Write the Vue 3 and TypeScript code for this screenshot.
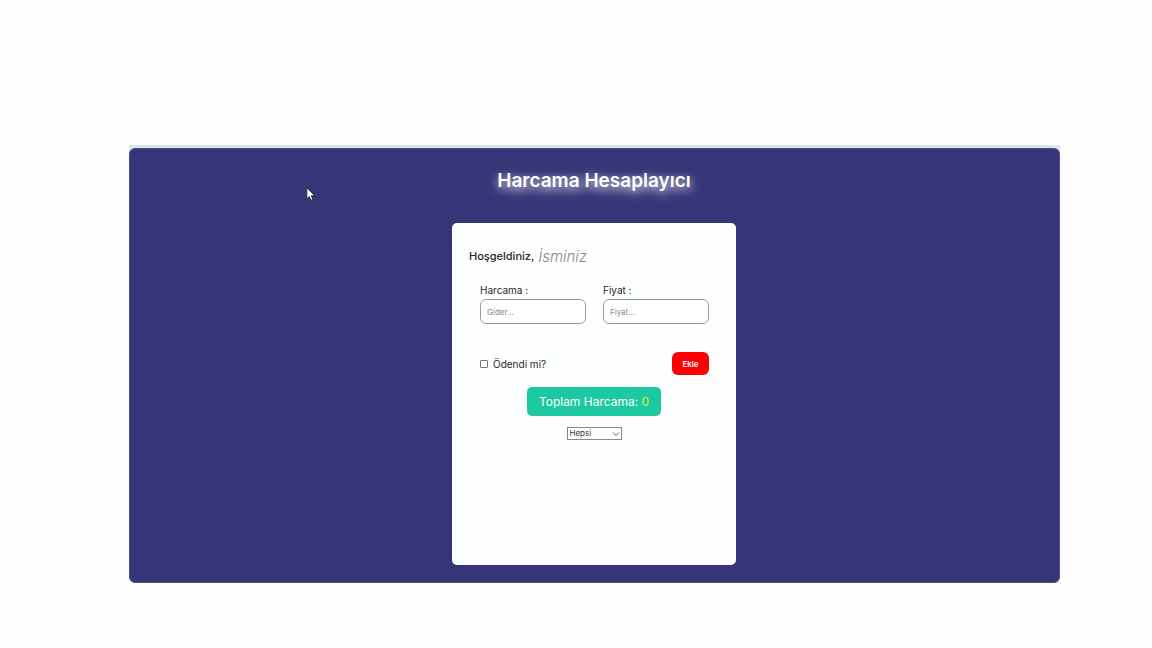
<script setup lang="ts">
import { computed, ref } from 'vue'

interface Expense {
  title: string
  price: number
  paid: boolean
}

const userName = ref('')
const title = ref('')
const price = ref('')
const paid = ref(false)
const filter = ref('all')
const expenses = ref<Expense[]>([])

const total = computed(() => expenses.value.reduce((sum, item) => sum + item.price, 0))
const visible = computed(() =>
  expenses.value.filter((item) => filter.value === 'all' || item.paid === (filter.value === 'paid')),
)

function addExpense() {
  const amount = Number(price.value)
  if (!title.value.trim() || !amount) return
  expenses.value.push({ title: title.value.trim(), price: amount, paid: paid.value })
  title.value = ''
  price.value = ''
  paid.value = false
}
</script>

<template>
  <div class="page">
    <div class="frame">
      <main class="panel">
        <h1>Harcama Hesaplayıcı</h1>
        <section class="card">
          <div class="welcome">
            <label for="user">Hoşgeldiniz,</label>
            <input id="user" v-model="userName" type="text" placeholder="İsminiz" />
          </div>
          <form class="form" @submit.prevent="addExpense">
            <div class="fields">
              <div class="field">
                <label for="title">Harcama :</label>
                <input id="title" v-model="title" type="text" placeholder="Gider..." />
              </div>
              <div class="field">
                <label for="price">Fiyat :</label>
                <input id="price" v-model="price" type="text" placeholder="Fiyat..." />
              </div>
            </div>
            <div class="actions">
              <label class="paid" for="paid">
                <input id="paid" v-model="paid" type="checkbox" />
                <span>Ödendi mi?</span>
              </label>
              <button type="submit">Ekle</button>
            </div>
          </form>
          <p class="total">Toplam Harcama: <span>{{ total }}</span></p>
          <div class="filter">
            <select v-model="filter" aria-label="Filtre">
              <option value="all">Hepsi</option>
              <option value="paid">Ödendi</option>
              <option value="unpaid">Ödenmedi</option>
            </select>
            <svg viewBox="0 0 8 6" aria-hidden="true">
              <path d="M1 1.5 L4 4.5 L7 1.5" />
            </svg>
          </div>
          <ul v-if="visible.length" class="list">
            <li v-for="(item, i) in visible" :key="i">
              <span>{{ item.title }}</span><span>{{ item.price }}</span>
            </li>
          </ul>
        </section>
      </main>
    </div>
    <svg class="cursor" viewBox="0 0 12 18" aria-hidden="true">
      <path d="M1 1 V14 L4 11.3 L6 16 L8.3 15 L6.3 10.5 H10.5 Z" />
    </svg>
  </div>
</template>

<style>
body {
  margin: 0;
  background: #fefefe;
}
</style>

<style scoped>
* {
  box-sizing: border-box;
}

.page {
  position: relative;
  padding: 145px 92px 64px 129px;
  font-family: Inter, "Open Sans", sans-serif;
  color: #25282c;
}

.frame {
  padding-top: 3px;
  background: linear-gradient(#dfe4ea 12px, #fefefe 12px);
}

.panel {
  display: flex;
  flex-direction: column;
  align-items: center;
  gap: 27px;
  padding: 17px 17px 17px 16px;
  border: 1px solid #4d4d8c;
  border-radius: 6px;
  background: #353578;
}

h1 {
  margin: 0;
  font-size: 19px;
  line-height: 30px;
  font-weight: 600;
  color: #fff;
  text-shadow:
    0 2px 10px rgba(255, 255, 255, 0.6),
    2px 4px 12px rgba(255, 255, 255, 0.6);
}

.card {
  display: flex;
  flex-direction: column;
  align-items: center;
  width: 100%;
  max-width: 284px;
  min-height: 342px;
  padding: 21px 17px;
  border-radius: 5px;
  background: #fdfefe;
}

input,
button,
select {
  font-family: inherit;
  margin: 0;
}

input::placeholder {
  color: #85878c;
  opacity: 1;
}

.welcome {
  display: flex;
  align-items: center;
  gap: 4px;
  width: 100%;
  height: 24px;
}

.welcome label {
  font-size: 11px;
  font-weight: 500;
}

.welcome input {
  flex: 1;
  min-width: 0;
  padding: 0;
  border: 0;
  outline: 0;
  background: transparent;
  font-size: 15px;
  font-style: italic;
  font-weight: 300;
  color: #25282c;
}

.form {
  width: 100%;
  padding: 15px 10px 0 11px;
}

.fields {
  display: grid;
  grid-template-columns: 1fr 1fr;
  gap: 17px;
}

.field {
  display: flex;
  flex-direction: column;
  gap: 2px;
}

.field label {
  font-size: 10px;
  line-height: 14px;
}

.field input {
  width: 100%;
  height: 25px;
  padding: 0 6px;
  border: 1px solid #999b9f;
  border-radius: 6px;
  background: #fff;
  font-size: 8px;
}

.actions {
  display: flex;
  align-items: center;
  justify-content: space-between;
  margin-top: 28px;
}

.paid {
  display: flex;
  align-items: center;
  gap: 5px;
  font-size: 10px;
}

.paid input {
  appearance: none;
  width: 8px;
  height: 8px;
  border: 1px solid #777;
  border-radius: 1px;
  background: #fff;
}

.paid input:checked {
  background: #353578;
}

button {
  width: 37px;
  height: 23px;
  padding: 0;
  border: 0;
  border-radius: 6px;
  background: #fb0004;
  font-size: 8px;
  font-weight: 600;
  color: #fff;
}

.total {
  margin: 12px 0 11px;
  padding: 0 12px;
  border-radius: 5px;
  background: #1dc9a0;
  font-size: 12px;
  line-height: 29px;
  color: #fff;
}

.total span {
  color: #d4ea3c;
}

.filter {
  display: grid;
  align-items: center;
  width: 55px;
}

.filter select,
.filter svg {
  grid-area: 1 / 1;
}

.filter select {
  appearance: none;
  width: 100%;
  height: 13px;
  padding: 0 2px;
  border: 1px solid #85878b;
  border-radius: 0;
  background: #fff;
  font-size: 8px;
  line-height: 11px;
  color: #34363a;
}

.filter svg {
  justify-self: end;
  width: 8px;
  height: 6px;
  margin-right: 2px;
  fill: none;
  stroke: #55585c;
  pointer-events: none;
}

.list {
  width: 100%;
  margin: 12px 0 0;
  padding: 0 11px;
  list-style: none;
  font-size: 10px;
}

.list li {
  display: flex;
  justify-content: space-between;
}

.cursor {
  position: absolute;
  left: 306px;
  top: 187px;
  width: 10px;
  height: 15px;
  fill: #fff;
  stroke: #25252f;
}
</style>
